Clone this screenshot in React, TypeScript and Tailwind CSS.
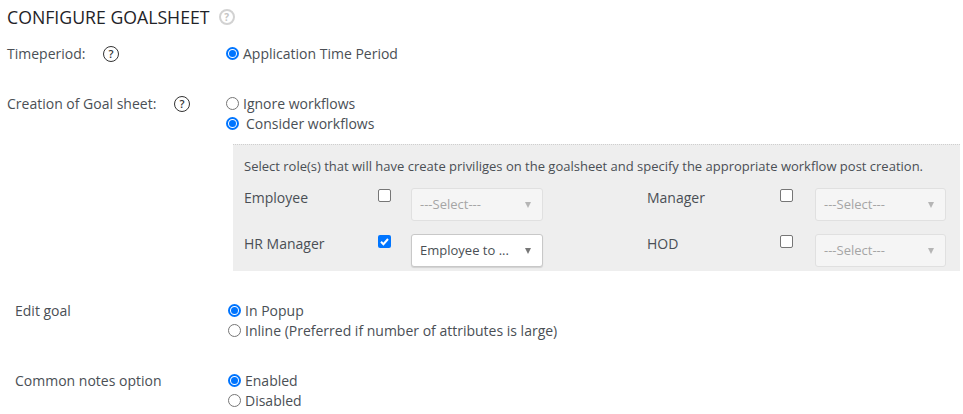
const ink = "text-[#4a4f55]";

function Radio({ checked, label, gap = "ml-1" }: { checked?: boolean; label: string; gap?: string }) {
  return (
    <div className="flex h-5 items-center">
      {checked ? (
        <span className="mb-[2px] box-border block h-[13px] w-[13px] rounded-full border-[2px] border-[#0075ff] bg-white p-[1px]">
          <span className="block h-full w-full rounded-full bg-[#0075ff]" />
        </span>
      ) : (
        <span className="mb-[2px] box-border block h-[13px] w-[13px] rounded-full border border-[#767676] bg-white" />
      )}
      <span className={`${gap} leading-5`}>{label}</span>
    </div>
  );
}

function Help({ muted }: { muted?: boolean }) {
  return (
    <span
      className={
        muted
          ? "flex h-4 w-4 items-center justify-center rounded-full border-2 border-[#d2d2d2] text-[10px] font-bold text-[#c4c4c4]"
          : "flex h-4 w-4 items-center justify-center rounded-full border border-[#333] text-[11px] font-semibold text-[#333]"
      }
    >
      ?
    </span>
  );
}

function Check({ checked }: { checked?: boolean }) {
  if (checked) {
    return (
      <span className="flex h-[13px] w-[13px] items-center justify-center rounded-[2px] bg-[#0075ff]">
        <svg width="11" height="11" viewBox="0 0 11 11" fill="none">
          <path d="M2 5.8 4.4 8.2 9 3" stroke="white" strokeWidth="2" />
        </svg>
      </span>
    );
  }
  return <span className="box-border block h-[13px] w-[13px] rounded-[2px] border border-[#767676] bg-white" />;
}

function Select({ value, disabled, right }: { value: string; disabled?: boolean; right?: boolean }) {
  return (
    <div
      className={
        disabled
          ? right
            ? "flex h-[33px] w-[131px] items-center justify-between rounded-[3px] border border-[#e0e0e0] bg-[#f5f5f5] pl-2 pr-[11px] text-[13px] text-[#a5a5a5]"
            : "flex h-[33px] w-[132px] items-center justify-between rounded-[3px] border border-[#e0e0e0] bg-[#f5f5f5] pl-2 pr-[11px] text-[13px] text-[#a5a5a5]"
          : "flex h-[33px] w-[132px] items-center justify-between rounded-[3px] border border-[#c8c8c8] bg-white pl-2 pr-[11px] text-[13px] text-[#4a4f55] shadow-[0_1px_1px_rgba(0,0,0,0.12)]"
      }
    >
      <span>{value}</span>
      <span
        className={
          disabled
            ? "h-0 w-0 border-x-[3.5px] border-t-[6px] border-x-transparent border-t-[#b5b5b5]"
            : "h-0 w-0 border-x-[3.5px] border-t-[6px] border-x-transparent border-t-[#777]"
        }
      />
    </div>
  );
}

function Role({ name, checked, value, disabled, right }: { name: string; checked?: boolean; value: string; disabled?: boolean; right?: boolean }) {
  return (
    <div className="flex h-[46px] items-start">
      <span className={right ? "w-[133px] leading-5" : "w-[134px] leading-5"}>{name}</span>
      <span className={right ? "mt-[1px] w-[35px]" : "mt-[1px] w-[33px]"}>
        <Check checked={checked} />
      </span>
      <Select value={value} disabled={disabled} right={right} />
    </div>
  );
}

export default function App() {
  return (
    <div className={`h-[414px] w-[963px] overflow-hidden bg-white font-['Open_Sans',sans-serif] text-[14px] ${ink}`}>
      {/* Heading */}
      <div className="flex items-center gap-[9px] pl-[7px] pt-[7px]">
        <h1 className="text-[17.7px] leading-5 text-[#1f2328]">CONFIGURE GOALSHEET</h1>
        <Help muted />
      </div>

      {/* Timeperiod */}
      <div className="mt-[17px] flex pl-[7px]">
        <div className="flex h-5 w-[219px] items-center">
          <span className="w-[96px] leading-5">Timeperiod:</span>
          <Help />
        </div>
        <Radio checked label="Application Time Period" />
      </div>

      {/* Creation of goal sheet */}
      <div className="mt-[30px] flex pl-[7px]">
        <div className="flex h-5 w-[219px] items-center">
          <span className="w-[167px] leading-5">Creation of Goal sheet:</span>
          <Help />
        </div>
        <div>
          <Radio label="Ignore workflows" />
          <Radio checked label="Consider workflows" gap="ml-[7px]" />
        </div>
      </div>

      {/* Role workflow panel */}
      <div className="ml-[233px] mr-[3px] mt-[10px] h-[127px] border-t border-dotted border-[#cfcfcf] bg-[#eeeeee] pl-[11px] pt-[11px]">
        <p className="text-[13px] leading-5">
          Select role(s) that will have create priviliges on the goalsheet and specify the appropriate workflow post creation.
        </p>
        <div className="mt-[12px] grid grid-cols-[403px_1fr]">
          <Role name="Employee" value="---Select---" disabled />
          <Role name="Manager" value="---Select---" disabled right />
          <Role name="HR Manager" checked value="Employee to ..." />
          <Role name="HOD" value="---Select---" disabled right />
        </div>
      </div>

      {/* Edit goal */}
      <div className="mt-[30px] flex pl-[15px]">
        <span className="h-5 w-[213px] leading-5">Edit goal</span>
        <div>
          <Radio checked label="In Popup" />
          <Radio label="Inline (Preferred if number of attributes is large)" />
        </div>
      </div>

      {/* Common notes */}
      <div className="mt-[30px] flex pl-[15px]">
        <span className="h-5 w-[213px] leading-5">Common notes option</span>
        <div>
          <Radio checked label="Enabled" />
          <Radio label="Disabled" />
        </div>
      </div>
    </div>
  );
}
